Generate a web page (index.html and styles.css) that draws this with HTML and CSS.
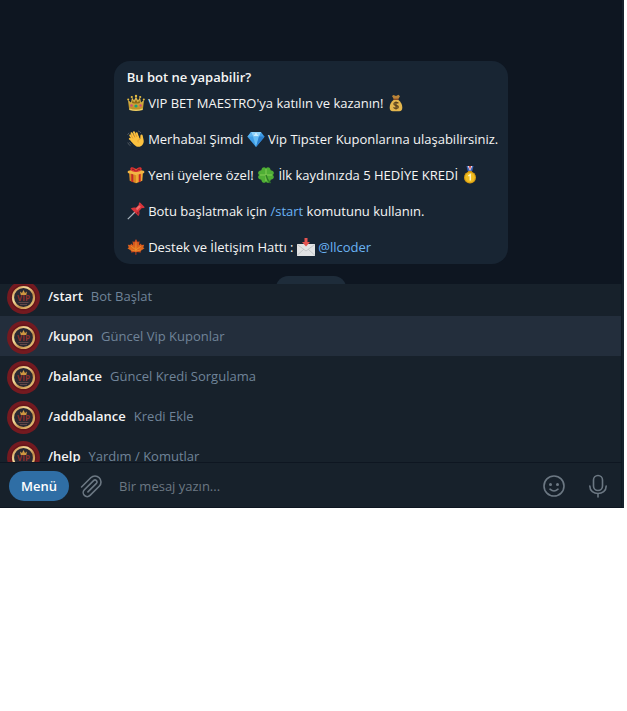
FILE: index.html
```html
<!DOCTYPE html>
<html lang="tr">
<head>
<meta charset="utf-8">
<meta name="viewport" content="width=device-width, initial-scale=1">
<title>VIP BET MAESTRO</title>
<link rel="stylesheet" href="styles.css">
</head>
<body>
<svg class="sprite" aria-hidden="true">
  <defs>
    <linearGradient id="gold" x1="0" y1="0" x2="0" y2="1"><stop offset="0" stop-color="#e9c65a"/><stop offset="1" stop-color="#b98a1e"/></linearGradient>
    <linearGradient id="ring" x1="0" y1="0" x2="1" y2="1"><stop offset="0" stop-color="#c98a45"/><stop offset=".35" stop-color="#f3dc9c"/><stop offset=".65" stop-color="#c08a48"/><stop offset="1" stop-color="#f2d488"/></linearGradient>
    <linearGradient id="leaf" x1="0" y1="0" x2="0" y2="1"><stop offset="0" stop-color="#c9401f"/><stop offset=".6" stop-color="#e06a1c"/><stop offset="1" stop-color="#b52a1a"/></linearGradient>
  </defs>
  <symbol id="crown" viewBox="0 0 18 18">
    <path d="M2 14.500 1 6l3 2.500L5 3.500l2 3L9 2.500l2 4 2-3 1 5L17 6l-1 8.500Q9 17.500 2 14.500z" fill="url(#gold)"/>
    <path d="m5.500 6 1.700 2.500L9 5.500l1.800 3L12.500 6l.5 3q-4 1.200-8 0z" fill="#8d6a16"/>
    <path d="M2 14.200q7 2.800 14 0l-.3 1.800q-6.700 2-13.400 0z" fill="#f0cf62"/>
    <circle cx="9" cy="2" r="1.200" fill="#e6bd42"/><circle cx="4.800" cy="3" r="1.100" fill="#e6bd42"/><circle cx="13.200" cy="3" r="1.100" fill="#e6bd42"/>
    <circle cx="1.200" cy="5.500" r="1" fill="#e6bd42"/><circle cx="16.800" cy="5.500" r="1" fill="#e6bd42"/>
    <circle cx="9" cy="12" r="1.600" fill="#18a07c"/><circle cx="4.500" cy="11.500" r="1.200" fill="#cf4a7b"/><circle cx="13.500" cy="11.500" r="1.200" fill="#cf4a7b"/>
  </symbol>
  <symbol id="money" viewBox="0 0 18 18">
    <path d="M6.500 1 9 2l2.500-1.200L13 2.200 11 5.500H7L5 2z" fill="#b98338"/>
    <path d="M7 5.500h4c3.300 2.600 4.300 5.200 4.300 8.300 0 2.200-1 3.400-3 3.400H5.700c-2 0-3-1.200-3-3.400C2.700 10.700 3.700 8.100 7 5.500z" fill="#e3b64e"/>
    <path d="M6.700 5.300h4.600" stroke="#8f4c22" stroke-width="1.400"/>
    <path d="M11.300 9.400C10.600 8 6.900 8 6.900 10c0 2 4.400 1 4.400 3 0 1.900-3.900 1.900-4.700.2M9 7.600v8" fill="none" stroke="#5c4420" stroke-width="1.300"/>
  </symbol>
  <symbol id="wave" viewBox="0 0 18 18">
    <path d="M5.500 9 3.300 5.400M7 8 4.600 3.200M9 7.300 7 2.300M11 7.500 9.700 3.300M5.500 11 2.800 8.800" stroke="#fbc13f" stroke-width="2" stroke-linecap="round"/>
    <path d="m4.500 8.500 6.800-2.700 1.900 3.400.2-3.800c.3-1.200 2-1.100 2.300.1.300 2 .8 3.300 1 5.300.3 3.300-2.200 6-5 6-3.300 0-5.200-2.800-7.700-5.900z" fill="#fbc13f"/>
    <path d="M6 8.500 4.500 6M8 7.500 6.500 4.300M9.900 7 9 4.500M13 9c-2 .7-2.500 2.200-1.700 3.500" fill="none" stroke="#d98a22" stroke-width=".6"/>
    <path d="M.8 12.500q.5 2.300 2.700 3.200M2.500 12.200q.6 1.400 1.800 2M11 1q2 .2 2.900 2M.5 5 2 2.800" fill="none" stroke="#5a626a" stroke-width=".8"/>
  </symbol>
  <symbol id="gem" viewBox="0 0 18 18">
    <path d="M4 2h10l3.600 4.700L9 17 .4 6.700z" fill="#3f9de6"/>
    <path d="m4 2 2 4.500L9 2zM14 2l-2 4.500L9 2z" fill="#8fd3fb"/><path d="m9 2 3 4.500H6z" fill="#c9edff"/>
    <path d="M6 6.500h6L9 17z" fill="#66bdf5"/><path d="M12 6.500h5.600L9 17z" fill="#2a7dcc"/><path d="M.4 6.700 4 2l2 4.500z" fill="#5ab2ee"/>
  </symbol>
  <symbol id="gift" viewBox="0 0 18 18">
    <path d="m2 6 7 3v8.300l-6.300-2.500z" fill="#d98b22"/><path d="m16 6-7 3v8.300l6.300-2.500z" fill="#f0a934"/>
    <path d="m.8 5 8-2.300 8.400 2.300v2L9 9.300.8 7z" fill="#f3b544"/>
    <path d="m4.300 7.800 2 .6v8l-2-.8zM13.700 7.800l-2 .6v8l2-.8z" fill="#c5282a"/>
    <path d="M9 6C7 6 3 5.500 3.300 2.600 3.700.2 8 1 9 4c1-3 5.300-3.800 5.700-1.400C15 5.500 11 6 9 6z" fill="#d93232"/>
    <path d="M5 3.200q2-.4 3 1.500M13 3.200q-2-.4-3 1.500" stroke="#861b1e" fill="none"/>
  </symbol>
  <symbol id="clover" viewBox="0 0 18 18">
    <g fill="#4fae35"><path id="petal" d="M9 9C5 8.500 3.800 6 4.500 3.500 5.200 1 7.500.3 9 2.300 10.500.3 12.800 1 13.500 3.500 14.200 6 13 8.500 9 9z"/>
    <use href="#petal" transform="rotate(90 9 9)"/><use href="#petal" transform="rotate(180 9 9)"/><use href="#petal" transform="rotate(270 9 9)"/></g>
    <path d="M9 3v12M3 9h12" stroke="#8bd35a" stroke-width=".9"/><path d="M9 9q1 5 4.500 8" fill="none" stroke="#2f7c27" stroke-width="1.300"/>
  </symbol>
  <symbol id="medal" viewBox="0 0 18 18">
    <path d="M5.500 0h7L11 6H7z" fill="#3c62b8"/><path d="m6.700 0 2.300 5 2.300-5z" fill="#eee"/><path d="m7.900 0 1.100 4 1.100-4z" fill="#d43d41"/>
    <path d="M7 5h4v2H7z" fill="#c48a13"/><circle cx="9" cy="11.500" r="6" fill="#d89c12"/><circle cx="9" cy="11.500" r="4.800" fill="#f0bd20"/>
    <path d="m7.300 10 2-1.400v6" fill="none" stroke="#fff3be" stroke-width="1.500"/>
  </symbol>
  <symbol id="pin" viewBox="0 0 18 18">
    <path d="M8 10 .8 17.200" stroke="#a7b3bd" stroke-width="1.200"/>
    <path d="M3.800 6.500c2-1.300 3.900-1.300 5.200-.7l2.800-2.800c-.3-1.200.1-2.100 1-2.800l5 5c-.8.900-1.700 1.200-2.900.9l-2.800 2.800c.7 1.700.6 3.500-.8 5.200z" fill="#d8353b"/>
    <path d="m9 6.300 3.200-3.100 1.600 1.600L10 8.500z" fill="#f06c6a"/><path d="m9.500 10.500 2-1.300q.5 2-.3 4z" fill="#9b1d29"/>
  </symbol>
  <symbol id="maple" viewBox="0 0 18 18">
    <path d="m9 1 1.700 3 1.800-.7-.5 3.900 2-1.700.5 1.500 2.700-.2-1 2.600 1.300.9-3.900 2.700.4 1.600-4.500-.5L9.300 17h-.8L8.300 14l-4.300.6.400-1.600-3.900-2.700 1.300-.9-1-2.600 2.700.2L4 5.500l2 1.700-.5-3.900 1.800.7z" fill="url(#leaf)"/>
    <path d="m9 4-.2 9.500M8.800 12 4 8M9 12l5-4M8.800 13 4 12M9 13l5-1" stroke="#f4aa35" stroke-width=".6"/>
  </symbol>
  <symbol id="mail" viewBox="0 0 18 18">
    <path d="M0 6h18v12H0z" fill="#e2e3e4"/><path d="m0 17.500 7-6.500M18 17.500 11 11M.3 6.500 9 13l8.700-6.500" fill="none" stroke="#b8babd" stroke-width=".7"/>
    <path d="M7.500 0h3v4h2.500L9 8.500 5 4h2.500z" fill="#e55350"/>
  </symbol>
  <symbol id="vip" viewBox="0 0 33 33">
    <circle cx="16.500" cy="16.500" r="16.500" fill="#741a20"/><circle cx="16.500" cy="16.500" r="13" fill="#651419"/>
    <circle cx="16.500" cy="16.500" r="10.500" fill="#282832" stroke="url(#ring)" stroke-width="2.200"/>
    <path d="m13 10.500 2 1.500 1.500-3 1.500 3 2-1.500-.7 3.500h-5.600z" fill="#cf9840"/>
    <text x="16.500" y="20" text-anchor="middle" class="vip-mark">VIP</text>
    <path d="M11.500 21.500h10M13 23.500h7" stroke="#60484a" fill="none"/>
  </symbol>
</svg>

<div class="app">
  <main class="chat">
    <article class="bubble">
      <h1>Bu bot ne yapabilir?</h1>
      <p><svg class="emoji"><use href="#crown"/></svg> VIP BET MAESTRO'ya katılın ve kazanın! <svg class="emoji"><use href="#money"/></svg></p>
      <p><svg class="emoji"><use href="#wave"/></svg> Merhaba! Şimdi <svg class="emoji"><use href="#gem"/></svg> Vip Tipster Kuponlarına ulaşabilirsiniz.</p>
      <p><svg class="emoji"><use href="#gift"/></svg> Yeni üyelere özel! <svg class="emoji"><use href="#clover"/></svg> İlk kaydınızda 5 HEDİYE KREDİ <svg class="emoji"><use href="#medal"/></svg></p>
      <p><svg class="emoji"><use href="#pin"/></svg> Botu başlatmak için <a href="#start">/start</a> komutunu kullanın.</p>
      <p><svg class="emoji"><use href="#maple"/></svg> Destek ve İletişim Hattı : <svg class="emoji"><use href="#mail"/></svg> <a href="#llcoder">@llcoder</a></p>
    </article>
    <div class="date-pill"></div>
  </main>

  <section class="commands" aria-label="Komutlar">
    <ul>
      <li><button type="button" class="command" id="start"><svg class="avatar"><use href="#vip"/></svg><b>/start</b><span>Bot Başlat</span></button></li>
      <li><button type="button" class="command selected"><svg class="avatar"><use href="#vip"/></svg><b>/kupon</b><span>Güncel Vip Kuponlar</span></button></li>
      <li><button type="button" class="command"><svg class="avatar"><use href="#vip"/></svg><b>/balance</b><span>Güncel Kredi Sorgulama</span></button></li>
      <li><button type="button" class="command"><svg class="avatar"><use href="#vip"/></svg><b>/addbalance</b><span>Kredi Ekle</span></button></li>
      <li><button type="button" class="command"><svg class="avatar"><use href="#vip"/></svg><b>/help</b><span>Yardım / Komutlar</span></button></li>
    </ul>
  </section>

  <form class="composer">
    <button type="button" class="menu">Menü</button>
    <button type="button" class="icon" aria-label="Dosya ekle">
      <svg viewBox="0 0 24 24"><path d="m2.560 12.950 9.190-9.190a6 6 0 0 1 8.490 8.490l-9.190 9.190a4 4 0 0 1-5.660-5.660l9.200-9.190a2 2 0 0 1 2.830 2.830l-8.490 8.480"/></svg>
    </button>
    <input type="text" aria-label="Mesaj" placeholder="Bir mesaj yazın...">
    <button type="button" class="icon" aria-label="Emoji">
      <svg viewBox="0 0 24 24"><circle cx="12" cy="12" r="10"/><path d="M8 15.200q4 3.600 8 0"/><circle class="dot" cx="8.500" cy="10.500" r="1.500"/><circle class="dot" cx="15.500" cy="10.500" r="1.500"/></svg>
    </button>
    <button type="button" class="icon" aria-label="Sesli mesaj">
      <svg viewBox="0 0 24 24"><rect x="7.500" y="1.500" width="9" height="15" rx="4.500"/><path d="M3.800 12c0 10 16.400 10 16.400 0M12 19.500V23"/></svg>
    </button>
  </form>
</div>
</body>
</html>
```
FILE: styles.css
```css
* {
  box-sizing: border-box;
}

body {
  margin: 0;
  padding-right: 3px;
  background: #fff;
  color: #f5f5f5;
  font: 13px/18px "Open Sans", "Noto Sans", sans-serif;
}

button,
input {
  margin: 0;
  padding: 0;
  border: 0;
  background: none;
  color: inherit;
  font: inherit;
}

a {
  color: #6ab3f3;
  text-decoration: none;
}

.sprite {
  position: absolute;
  width: 0;
  height: 0;
}

.vip-mark {
  fill: #8f2f2b;
  font: 700 8px "Open Sans", sans-serif;
}

.app {
  background: #17212b;
  border-right: 2px solid #17212b;
  border-bottom: 1px solid #0e1621;
}

.chat {
  display: flex;
  flex-direction: column;
  align-items: center;
  gap: 12px;
  height: 284px;
  padding-top: 61px;
  overflow: hidden;
  background: #0e1621;
}

.bubble {
  flex: none;
  padding: 7px 10px 8px 13px;
  border-radius: 16px;
  background: #182533;
}

.bubble h1 {
  margin: 0 0 8px;
  font-size: 13px;
  font-weight: 600;
  line-height: 18px;
}

.bubble p {
  margin: 0 0 18px;
}

.bubble p:last-child {
  margin-bottom: 0;
}

.emoji {
  width: 18px;
  height: 18px;
  vertical-align: top;
}

.date-pill {
  flex: none;
  width: 70px;
  height: 24px;
  border-radius: 12px;
  background: #1e2c3a;
}

.commands {
  height: 178px;
  overflow: hidden;
  border-right: 1px solid #111a23;
}

.commands ul {
  margin: -8px 0 0;
  padding: 0;
  list-style: none;
}

.command {
  display: flex;
  align-items: center;
  gap: 8px;
  width: 100%;
  height: 40px;
  padding: 0 7px;
  text-align: left;
}

.command.selected {
  background: #232e3c;
}

.command b {
  font-weight: 600;
}

.command span {
  color: #708499;
}

.avatar {
  width: 33px;
  height: 33px;
  margin-top: 2px;
}

.composer {
  display: flex;
  align-items: center;
  height: 45px;
  padding: 0 1px 0 9px;
  border-top: 1px solid #0e1621;
  border-right: 1px solid #111a23;
}

.menu {
  height: 30px;
  padding: 0 12px;
  margin-top: 2px;
  border-radius: 15px;
  background: #2f6ea5;
  color: #fff;
  font-weight: 600;
}

.icon {
  display: flex;
  align-items: center;
  justify-content: center;
  width: 44px;
  height: 44px;
}

.icon svg {
  width: 24px;
  height: 24px;
  margin-top: 2px;
  fill: none;
  stroke: #6c7883;
  stroke-width: 1.6;
  stroke-linecap: round;
}

.icon .dot {
  fill: #6c7883;
  stroke: none;
}

.composer input {
  flex: 1;
  min-width: 0;
  height: 44px;
  padding-left: 6px;
  margin-top: 2px;
  outline: 0;
}

.composer input::placeholder {
  color: #6c7883;
  opacity: 1;
}
```
